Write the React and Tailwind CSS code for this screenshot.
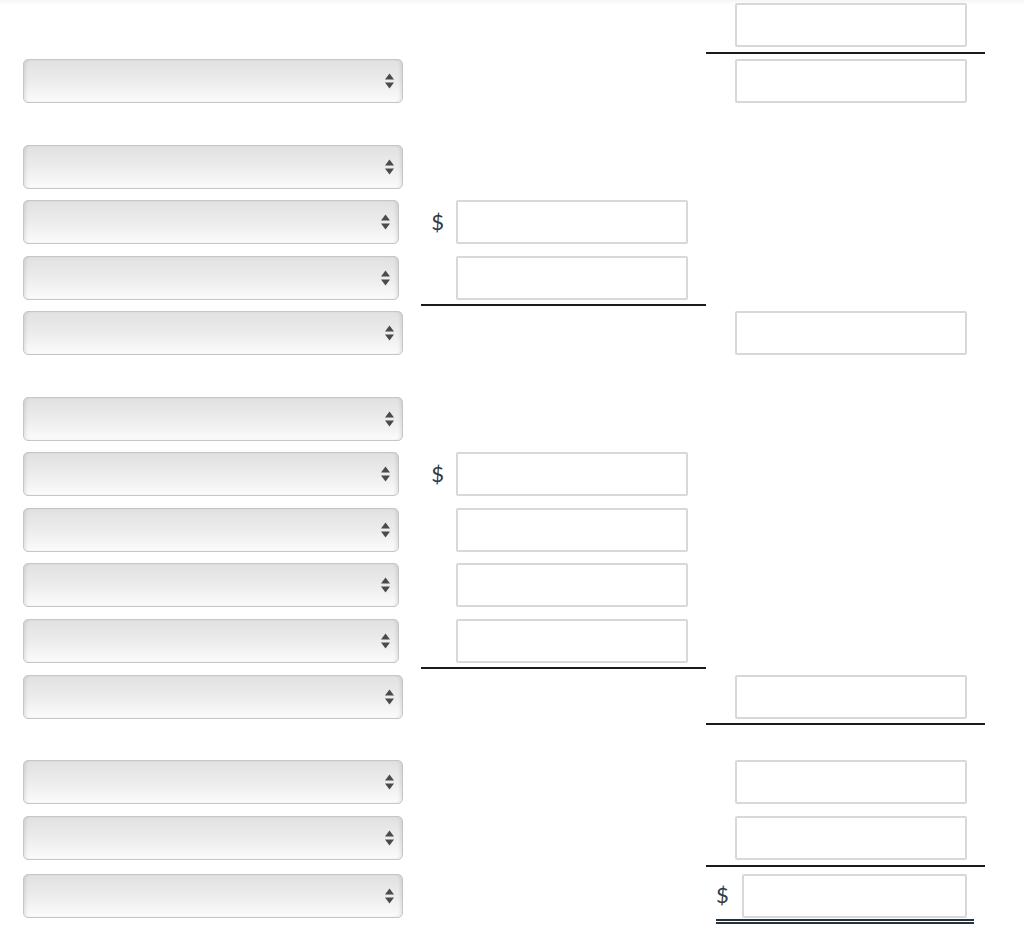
import React from 'react'

function Arrows() {
  return (
    <svg width="9" height="16" viewBox="0 0 9 16" className="shrink-0">
      <path d="M4.5 0.5 L9 6.5 L0 6.5 Z" fill="#4a4a4a" />
      <path d="M0 9.5 L9 9.5 L4.5 15.5 Z" fill="#4a4a4a" />
    </svg>
  )
}

function Select({ narrow }) {
  return (
    <div
      className={`ml-[23px] h-[44px] ${narrow ? 'w-[376px]' : 'w-[380px]'} flex items-center justify-end pr-[8px] rounded-[5px] border border-[#c6c6c6] bg-gradient-to-b from-[#e1e1e1] via-[#ececec] to-[#fbfbfb] shadow-[inset_3px_0_3px_-1px_rgba(0,0,0,0.08),inset_-3px_0_3px_-1px_rgba(0,0,0,0.08)]`}
    >
      <Arrows />
    </div>
  )
}

function Box({ w = 'w-[232px]' }) {
  return <div className={`h-[44px] ${w} rounded-[2px] border-2 border-[#d8d8d8] bg-white`} />
}

function Dollar() {
  return <span className="text-[22px] leading-none font-normal text-[#2d3b48]">$</span>
}

// one row of the worksheet: sel = left select, mid = middle input, right = right input
function Row({ pt, pb, sel, narrow, mid, midDollar, midLine, right, rightLine, total }) {
  return (
    <div className="flex">
      <div className="w-[421px]" style={{ paddingTop: pt, paddingBottom: pb }}>
        {sel && <Select narrow={narrow} />}
      </div>
      <div
        className={`w-[285px] ${midLine ? 'border-b-2 border-[#1a1a1a]' : ''}`}
        style={{ paddingTop: pt, paddingBottom: pb }}
      >
        {mid && (
          <div className="flex items-center">
            <div className="w-[35px] flex justify-end pr-[12px]">{midDollar && <Dollar />}</div>
            <Box />
          </div>
        )}
      </div>
      <div
        className={`w-[279px] ${rightLine ? 'border-b-2 border-[#1a1a1a]' : ''}`}
        style={{ paddingTop: pt, paddingBottom: total ? 0 : pb }}
      >
        {right && !total && (
          <div className="pl-[29px]">
            <Box />
          </div>
        )}
        {total && (
          <div className="ml-[10px] w-[258px] pr-[7px] pb-[1px] flex items-center border-b-[5px] border-double border-[#26333f]">
            <div className="w-[26px]">
              <Dollar />
            </div>
            <Box w="w-[225px]" />
          </div>
        )}
      </div>
    </div>
  )
}

export default function App() {
  return (
    <div className="min-h-[942px] bg-white font-['Lato','Liberation_Sans',sans-serif] shadow-[inset_0_5px_5px_-3px_rgba(0,0,0,0.05)]">
      <Row pt={3} pb={5} right rightLine />
      <Row pt={5} pb={37} sel right />
      <Row pt={5} pb={6} sel />
      <Row pt={5} pb={7} sel narrow mid midDollar />
      <Row pt={5} pb={4} sel narrow mid midLine />
      <Row pt={5} pb={37} sel right />
      <Row pt={5} pb={6} sel />
      <Row pt={5} pb={7} sel narrow mid midDollar />
      <Row pt={5} pb={6} sel narrow mid />
      <Row pt={5} pb={7} sel narrow mid />
      <Row pt={5} pb={4} sel narrow mid midLine />
      <Row pt={6} pb={4} sel right rightLine />
      <div className="h-[30px]" />
      <Row pt={5} pb={7} sel right />
      <Row pt={5} pb={5} sel right rightLine />
      <Row pt={7} pb={0} sel total />
    </div>
  )
}
